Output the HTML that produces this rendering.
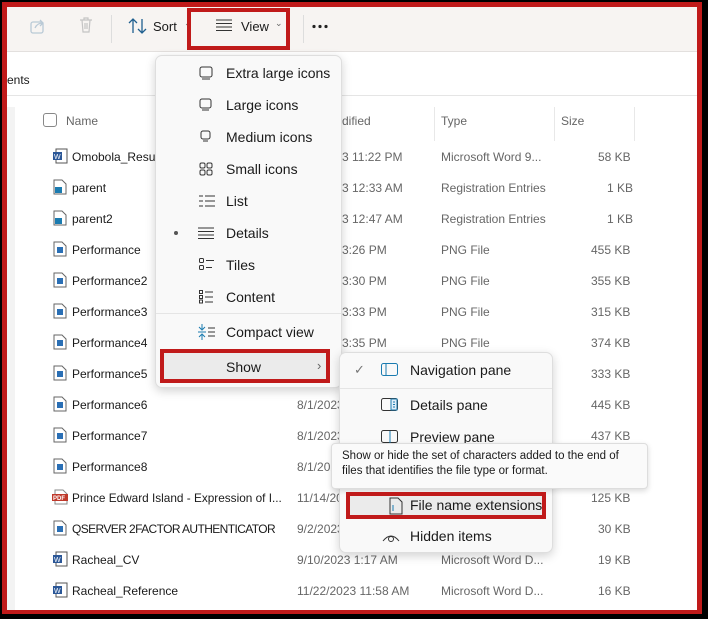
<!DOCTYPE html>
<html><head><meta charset="utf-8"><style>
*{box-sizing:border-box;margin:0;padding:0}
body{width:708px;height:619px;overflow:hidden;background:#000;font-family:"Liberation Sans",sans-serif;position:relative}
.frame{position:absolute;left:2px;top:2px;width:700px;height:612px;background:#c01a1a}
.inner{position:absolute;left:7px;top:7px;width:690px;height:603px;background:#fff;overflow:hidden}
.abs{position:absolute}
.tb{left:0;top:0;width:690px;height:45px;background:#f7f4f2;border-bottom:1px solid #e3e0de}
.addr{left:0;top:46px;width:690px;height:43px;border-bottom:1px solid #e5e5e5}
.t{position:absolute;font-size:12px;color:#1a1a1a;white-space:nowrap}
.g{color:#666}
.menu{background:#f9f9f9;border:1px solid #dedede;border-radius:7px;box-shadow:0 3px 10px rgba(0,0,0,.18)}
.mi{position:absolute;font-size:14px;color:#1a1a1a;white-space:nowrap}
.red{position:absolute;border:4px solid #c01a1a}
.ico{position:absolute}
</style></head><body>
<div class="frame"></div>
<div class="inner">
 <div class="abs tb"></div>
 <svg class="ico" style="left:22px;top:10px" width="18" height="18"><rect x="2" y="5" width="12" height="11" rx="2" fill="none" stroke="#b9c9d6" stroke-width="1.3"/><path d="M6 11 Q8 6 14 6 M11 3 l3 3 -3 3" fill="none" stroke="#b9c9d6" stroke-width="1.3"/></svg>
 <svg class="ico" style="left:71px;top:9px" width="16" height="18"><path d="M2 4h12M6 4V2h4v2M4 4l1 12h6l1-12M7 7v6M9 7v6" fill="none" stroke="#c4c4c4" stroke-width="1.2"/></svg>
 <div class="abs" style="left:104px;top:8px;width:1px;height:28px;background:#ddd"></div>
 <svg class="ico" style="left:121px;top:10px" width="20" height="18"><path d="M5 16V2M1 6l4-4 4 4M14 2v14M10 12l4 4 4-4" fill="none" stroke="#1f5f8f" stroke-width="1.3"/></svg>
 <div class="t" style="left:146px;top:12px;font-size:13px">Sort</div>
 <div class="t g" style="left:177px;top:11px;font-size:9px">⌄</div>
 <svg class="ico" style="left:209px;top:12px" width="16" height="12"><path d="M0 1h16M0 4.5h16M0 8h16M0 11.5h16" stroke="#333" stroke-width="1"/></svg>
 <div class="t" style="left:234px;top:12px;font-size:13px">View</div>
 <div class="t g" style="left:268px;top:11px;font-size:9px">⌄</div>
 <div class="abs" style="left:296px;top:8px;width:1px;height:28px;background:#ddd"></div>
 <svg class="ico" style="left:305px;top:17px" width="18" height="5"><circle cx="2" cy="2.5" r="1.6" fill="#222"/><circle cx="8" cy="2.5" r="1.6" fill="#222"/><circle cx="14" cy="2.5" r="1.6" fill="#222"/></svg>
 <div class="red" style="left:180px;top:1px;width:103px;height:42px"></div>
 <div class="abs addr"></div>
 <div class="t" style="left:0;top:66px">ents</div>
 <div class="abs" style="left:0;top:100px;width:8px;height:503px;background:#f3f3f3"></div>
 <div class="abs" style="left:36px;top:106px;width:14px;height:14px;border:1px solid #888;border-radius:3px"></div>
 <div class="t g" style="left:59px;top:107px">Name</div>
 <div class="t g" style="left:335px;top:107px">dified</div>
 <div class="abs" style="left:427px;top:100px;width:1px;height:34px;background:#e8e8e8"></div>
 <div class="t g" style="left:434px;top:107px">Type</div>
 <div class="abs" style="left:547px;top:100px;width:1px;height:34px;background:#e8e8e8"></div>
 <div class="t g" style="left:554px;top:107px">Size</div>
 <div class="abs" style="left:627px;top:100px;width:1px;height:34px;background:#e8e8e8"></div>
 <div class="t" style="left:65px;top:143px">Omobola_Resume</div><div class="t g" style="left:335px;top:143px">3 11:22 PM</div><div class="t g" style="left:434px;top:143px">Microsoft Word 9...</div><div class="t g" style="left:591px;top:143px">58 KB</div>
 <div class="t" style="left:65px;top:174px">parent</div><div class="t g" style="left:335px;top:174px">3 12:33 AM</div><div class="t g" style="left:434px;top:174px">Registration Entries</div><div class="t g" style="left:600px;top:174px">1 KB</div>
 <div class="t" style="left:65px;top:205px">parent2</div><div class="t g" style="left:335px;top:205px">3 12:47 AM</div><div class="t g" style="left:434px;top:205px">Registration Entries</div><div class="t g" style="left:600px;top:205px">1 KB</div>
 <div class="t" style="left:65px;top:236px">Performance</div><div class="t g" style="left:335px;top:236px">3:26 PM</div><div class="t g" style="left:434px;top:236px">PNG File</div><div class="t g" style="left:584px;top:236px">455 KB</div>
 <div class="t" style="left:65px;top:267px">Performance2</div><div class="t g" style="left:335px;top:267px">3:30 PM</div><div class="t g" style="left:434px;top:267px">PNG File</div><div class="t g" style="left:584px;top:267px">355 KB</div>
 <div class="t" style="left:65px;top:298px">Performance3</div><div class="t g" style="left:335px;top:298px">3:33 PM</div><div class="t g" style="left:434px;top:298px">PNG File</div><div class="t g" style="left:584px;top:298px">315 KB</div>
 <div class="t" style="left:65px;top:329px">Performance4</div><div class="t g" style="left:335px;top:329px">3:35 PM</div><div class="t g" style="left:434px;top:329px">PNG File</div><div class="t g" style="left:584px;top:329px">374 KB</div>
 <div class="t" style="left:65px;top:360px">Performance5</div><div class="t g" style="left:584px;top:360px">333 KB</div>
 <div class="t" style="left:65px;top:391px">Performance6</div><div class="t g" style="left:290px;top:391px">8/1/2023</div><div class="t g" style="left:584px;top:391px">445 KB</div>
 <div class="t" style="left:65px;top:422px">Performance7</div><div class="t g" style="left:290px;top:422px">8/1/2023</div><div class="t g" style="left:584px;top:422px">437 KB</div>
 <div class="t" style="left:65px;top:453px">Performance8</div><div class="t g" style="left:290px;top:453px">8/1/2023</div>
 <div class="t" style="left:65px;top:484px;font-size:11.8px">Prince Edward Island - Expression of I...</div><div class="t g" style="left:290px;top:484px">11/14/2023</div><div class="t g" style="left:584px;top:484px">125 KB</div>
 <div class="t" style="left:65px;top:515px;letter-spacing:-0.6px">QSERVER 2FACTOR AUTHENTICATOR</div><div class="t g" style="left:290px;top:515px">9/2/2023</div><div class="t g" style="left:591px;top:515px">30 KB</div>
 <div class="t" style="left:65px;top:546px">Racheal_CV</div><div class="t g" style="left:290px;top:546px">9/10/2023 1:17 AM</div><div class="t g" style="left:434px;top:546px">Microsoft Word D...</div><div class="t g" style="left:591px;top:546px">19 KB</div>
 <div class="t" style="left:65px;top:577px">Racheal_Reference</div><div class="t g" style="left:290px;top:577px">11/22/2023 11:58 AM</div><div class="t g" style="left:434px;top:577px">Microsoft Word D...</div><div class="t g" style="left:591px;top:577px">16 KB</div>
 <svg class="ico" style="left:45px;top:141px" width="16" height="16"><rect x="4" y="1" width="11" height="14" fill="#fff" stroke="#555"/><rect x="1" y="4" width="9" height="8" fill="#2b5797"/><text x="2" y="11" font-size="7" fill="#fff" font-family="Liberation Sans">W</text></svg>
 <svg class="ico" style="left:46px;top:172px" width="14" height="16"><path d="M1 1h8l4 4v10H1z" fill="#fff" stroke="#666"/><rect x="2" y="8" width="7" height="6" fill="#1a7bb0"/></svg>
 <svg class="ico" style="left:46px;top:203px" width="14" height="16"><path d="M1 1h8l4 4v10H1z" fill="#fff" stroke="#666"/><rect x="2" y="8" width="7" height="6" fill="#1a7bb0"/></svg>
 <svg class="ico" style="left:46px;top:234px" width="14" height="16"><path d="M1 1h8l4 4v10H1z" fill="#fff" stroke="#666"/><rect x="4" y="6" width="6" height="6" fill="#2a6fb5"/></svg>
 <svg class="ico" style="left:46px;top:265px" width="14" height="16"><path d="M1 1h8l4 4v10H1z" fill="#fff" stroke="#666"/><rect x="4" y="6" width="6" height="6" fill="#2a6fb5"/></svg>
 <svg class="ico" style="left:46px;top:296px" width="14" height="16"><path d="M1 1h8l4 4v10H1z" fill="#fff" stroke="#666"/><rect x="4" y="6" width="6" height="6" fill="#2a6fb5"/></svg>
 <svg class="ico" style="left:46px;top:327px" width="14" height="16"><path d="M1 1h8l4 4v10H1z" fill="#fff" stroke="#666"/><rect x="4" y="6" width="6" height="6" fill="#2a6fb5"/></svg>
 <svg class="ico" style="left:46px;top:358px" width="14" height="16"><path d="M1 1h8l4 4v10H1z" fill="#fff" stroke="#666"/><rect x="4" y="6" width="6" height="6" fill="#2a6fb5"/></svg>
 <svg class="ico" style="left:46px;top:389px" width="14" height="16"><path d="M1 1h8l4 4v10H1z" fill="#fff" stroke="#666"/><rect x="4" y="6" width="6" height="6" fill="#2a6fb5"/></svg>
 <svg class="ico" style="left:46px;top:420px" width="14" height="16"><path d="M1 1h8l4 4v10H1z" fill="#fff" stroke="#666"/><rect x="4" y="6" width="6" height="6" fill="#2a6fb5"/></svg>
 <svg class="ico" style="left:46px;top:451px" width="14" height="16"><path d="M1 1h8l4 4v10H1z" fill="#fff" stroke="#666"/><rect x="4" y="6" width="6" height="6" fill="#2a6fb5"/></svg>
 <svg class="ico" style="left:45px;top:482px" width="16" height="16"><path d="M3 1h8l4 4v10H3z" fill="#fff" stroke="#888"/><rect x="0" y="5" width="16" height="7" fill="#c0392b"/><text x="1" y="11" font-size="6" fill="#fff" font-family="Liberation Sans" font-weight="bold">PDF</text></svg>
 <svg class="ico" style="left:46px;top:513px" width="14" height="16"><path d="M1 1h8l4 4v10H1z" fill="#fff" stroke="#666"/><rect x="4" y="6" width="6" height="6" fill="#2a6fb5"/></svg>
 <svg class="ico" style="left:45px;top:544px" width="16" height="16"><rect x="4" y="1" width="11" height="14" fill="#fff" stroke="#555"/><rect x="1" y="4" width="9" height="8" fill="#2b5797"/><text x="2" y="11" font-size="7" fill="#fff" font-family="Liberation Sans">W</text></svg>
 <svg class="ico" style="left:45px;top:575px" width="16" height="16"><rect x="4" y="1" width="11" height="14" fill="#fff" stroke="#555"/><rect x="1" y="4" width="9" height="8" fill="#2b5797"/><text x="2" y="11" font-size="7" fill="#fff" font-family="Liberation Sans">W</text></svg>

 <div class="abs menu" style="left:148px;top:48px;width:187px;height:333px"></div>
 <div class="abs" style="left:149px;top:306px;width:185px;height:1px;background:#e5e5e5"></div>
 <svg class="ico" style="left:191px;top:58px" width="16" height="16"><rect x="2" y="2" width="12" height="10" rx="2" fill="none" stroke="#333"/><path d="M4 14h8" stroke="#333"/></svg>
 <div class="mi" style="left:219px;top:58px">Extra large icons</div>
 <svg class="ico" style="left:192px;top:91px" width="14" height="14"><rect x="1" y="1" width="11" height="9" rx="2" fill="none" stroke="#333"/><path d="M3 12h7" stroke="#333"/></svg>
 <div class="mi" style="left:219px;top:90px">Large icons</div>
 <svg class="ico" style="left:193px;top:123px" width="12" height="14"><rect x="1" y="1" width="9" height="8" rx="2" fill="none" stroke="#333"/><path d="M3 11h5" stroke="#333"/></svg>
 <div class="mi" style="left:219px;top:122px">Medium icons</div>
 <svg class="ico" style="left:192px;top:155px" width="14" height="14"><rect x="1" y="1" width="5" height="5" rx="1.5" fill="none" stroke="#333"/><rect x="8" y="1" width="5" height="5" rx="1.5" fill="none" stroke="#333"/><rect x="1" y="8" width="5" height="5" rx="1.5" fill="none" stroke="#333"/><rect x="8" y="8" width="5" height="5" rx="1.5" fill="none" stroke="#333"/></svg>
 <div class="mi" style="left:219px;top:154px">Small icons</div>
 <svg class="ico" style="left:192px;top:188px" width="16" height="12"><path d="M0 1h4M6 1h10M0 6h4M6 6h10M0 11h4M6 11h10" stroke="#333"/></svg>
 <div class="mi" style="left:219px;top:186px">List</div>
 <div class="abs" style="left:167px;top:224px;width:4px;height:4px;border-radius:2px;background:#555"></div>
 <svg class="ico" style="left:191px;top:220px" width="16" height="12"><path d="M0 1h16M0 4.5h16M0 8h16M0 11.5h16" stroke="#333"/></svg>
 <div class="mi" style="left:219px;top:218px">Details</div>
 <svg class="ico" style="left:192px;top:251px" width="16" height="14"><rect x="0.5" y="0.5" width="4" height="4" rx="1" fill="none" stroke="#333"/><rect x="0.5" y="7.5" width="4" height="4" rx="1" fill="none" stroke="#333"/><path d="M7 2.5h8M7 9.5h6" stroke="#333"/></svg>
 <div class="mi" style="left:219px;top:250px">Tiles</div>
 <svg class="ico" style="left:192px;top:283px" width="16" height="14"><rect x="0.5" y="0.5" width="3" height="3" fill="none" stroke="#333"/><rect x="0.5" y="5.5" width="3" height="3" fill="none" stroke="#333"/><rect x="0.5" y="10" width="3" height="3" fill="none" stroke="#333"/><path d="M6 2h8M6 7h8M6 12h8" stroke="#333"/></svg>
 <div class="mi" style="left:219px;top:282px">Content</div>
 <svg class="ico" style="left:191px;top:317px" width="18" height="16"><path d="M4 0v5M1 3l3 3 3-3M4 16v-5M1 13l3-3 3 3M0 8h8" stroke="#1a7bb0" fill="none"/><path d="M10 4h7M10 8h7M10 12h7" stroke="#333"/></svg>
 <div class="mi" style="left:219px;top:317px">Compact view</div>
 <div class="abs" style="left:156px;top:345px;width:165px;height:28px;background:#ebebeb"></div>
 <div class="mi" style="left:219px;top:352px">Show</div>
 <div class="mi" style="left:310px;top:351px;color:#666;font-size:13px">›</div>
 <div class="red" style="left:153px;top:342px;width:170px;height:34px"></div>

 <div class="abs menu" style="left:332px;top:345px;width:214px;height:201px"></div>
 <div class="abs" style="left:333px;top:381px;width:212px;height:1px;background:#e5e5e5"></div>
 <div class="mi" style="left:347px;top:355px;color:#777;font-size:13px">✓</div>
 <svg class="ico" style="left:374px;top:356px" width="18" height="14"><rect x="0.5" y="0.5" width="16" height="12" rx="2" fill="none" stroke="#1a7bb0"/><path d="M5 1v12" stroke="#1a7bb0"/></svg>
 <div class="mi" style="left:403px;top:355px">Navigation pane</div>
 <svg class="ico" style="left:374px;top:391px" width="18" height="14"><rect x="0.5" y="0.5" width="16" height="12" rx="2" fill="none" stroke="#333"/><rect x="10" y="1" width="6" height="11" fill="#e0eef8" stroke="#1a7bb0"/><path d="M12 4h2M12 6.5h2M12 9h2" stroke="#1a7bb0"/></svg>
 <div class="mi" style="left:403px;top:390px">Details pane</div>
 <svg class="ico" style="left:374px;top:423px" width="18" height="14"><rect x="0.5" y="0.5" width="16" height="12" rx="2" fill="none" stroke="#333"/><path d="M9 1v12" stroke="#1a7bb0"/></svg>
 <div class="mi" style="left:403px;top:422px">Preview pane</div>
 <div class="abs" style="left:324px;top:436px;width:317px;height:46px;background:#fafafa;border:1px solid #ddd;border-radius:4px;box-shadow:0 2px 6px rgba(0,0,0,.15)"></div>
 <div class="t" style="left:335px;top:442px;font-size:11.5px;line-height:15px">Show or hide the set of characters added to the end of<br>files that identifies the file type or format.</div>
 <div class="abs" style="left:343px;top:488px;width:192px;height:24px;background:#ebebeb"></div>
 <svg class="ico" style="left:382px;top:490px" width="14" height="18"><path d="M1 1h8l4 4v12H1z" fill="none" stroke="#333"/><path d="M4 8v6" stroke="#1a7bb0"/></svg>
 <div class="mi" style="left:403px;top:490px">File name extensions</div>
 <div class="red" style="left:339px;top:485px;width:200px;height:27px"></div>
 <svg class="ico" style="left:375px;top:524px" width="18" height="12"><path d="M1 10 Q9 0 17 10" fill="none" stroke="#333"/><circle cx="9" cy="8" r="2.5" fill="none" stroke="#333"/></svg>
 <div class="mi" style="left:403px;top:521px">Hidden items</div>
</div>
</body></html>
